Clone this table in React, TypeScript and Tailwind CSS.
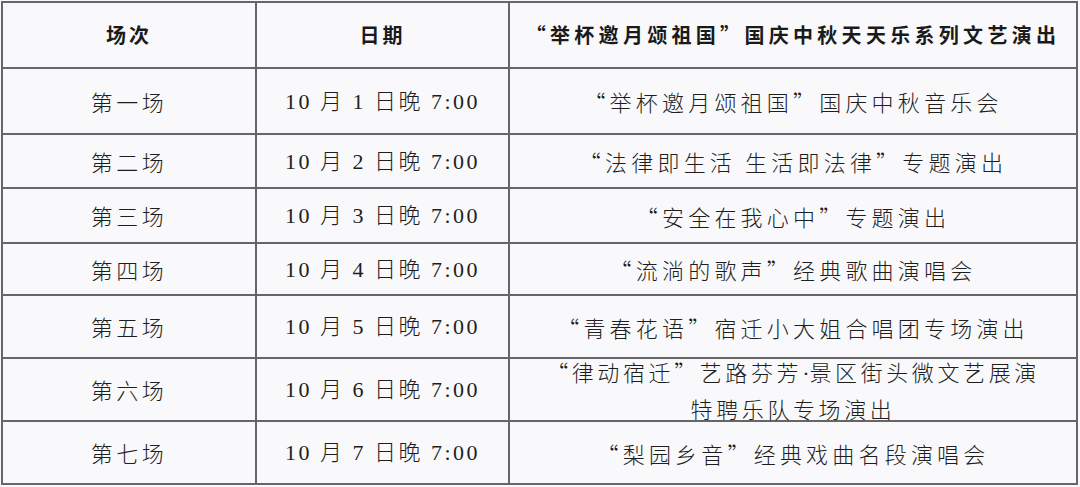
import React from 'react';

// Schedule table: 国庆中秋 series of performances
const rows: { name: string; day: string; title: React.ReactNode; h: string; tr?: string }[] = [
  { name: '第一场', day: '1', title: '“举杯邀月颂祖国”国庆中秋音乐会', h: 'h-[66px]' },
  { name: '第二场', day: '2', title: '“法律即生活 生活即法律”专题演出', h: 'h-[54px]' },
  { name: '第三场', day: '3', title: '“安全在我心中”专题演出', h: 'h-[55px]' },
  { name: '第四场', day: '4', title: '“流淌的歌声”经典歌曲演唱会', h: 'h-[52px]' },
  { name: '第五场', day: '5', title: '“青春花语”宿迁小大姐合唱团专场演出', h: 'h-[63px]' },
  {
    name: '第六场',
    day: '6',
    title: (
      <>
        “律动宿迁”艺路芬芳<span className="font-['Liberation_Serif',serif] tracking-normal">·</span>景区街头微文艺展演
        <br />
        特聘乐队专场演出
      </>
    ),
    h: 'h-[63px]',
    tr: 'tracking-[3.6px]',
  },
  { name: '第七场', day: '7', title: '“梨园乡音”经典戏曲名段演唱会', h: 'h-[63px]' },
];

const cell = 'flex items-center justify-center text-center border-r-2 border-b-2 border-[#666]';
const head = "font-['Noto_Sans_CJK_SC',sans-serif] font-bold text-[20px] text-[#1a1a1a]";
const cjk = "font-['Noto_Sans_CJK_SC',sans-serif] font-light text-[22px] text-[#1e1e1e]";
const date = "font-['Liberation_Serif','Noto_Sans_CJK_SC',serif] font-light text-[22px] tracking-[2.5px] text-[#1e1e1e]";

export default function App() {
  return (
    <div className="w-[1080px] h-[487px] bg-[#f9f9fb] pl-[1px] pt-[1px] overflow-hidden">
      <div className="grid grid-cols-[254px_253px_568px] border-l-2 border-t-2 border-[#666] w-[1077px]">
        {/* header */}
        <div className={`${cell} h-[66px] ${head} tracking-[3px]`}>场次</div>
        <div className={`${cell} h-[66px] ${head} tracking-[3px]`}>日期</div>
        <div className={`${cell} h-[66px] ${head} tracking-[4.3px]`}>
          “举杯邀月颂祖国”国庆中秋天天乐系列文艺演出
        </div>

        {rows.map((r) => (
          <React.Fragment key={r.name}>
            <div className={`${cell} ${r.h} ${cjk} tracking-[3.5px]`}>{r.name}</div>
            <div className={`${cell} ${r.h} ${date} whitespace-pre`}>{`10 月 ${r.day} 日晚 7:00`}</div>
            <div className={`${cell} ${r.h} ${cjk} ${r.tr ?? 'tracking-[4.2px]'} leading-[34px]`}>
              <div>{r.title}</div>
            </div>
          </React.Fragment>
        ))}
      </div>
    </div>
  );
}
